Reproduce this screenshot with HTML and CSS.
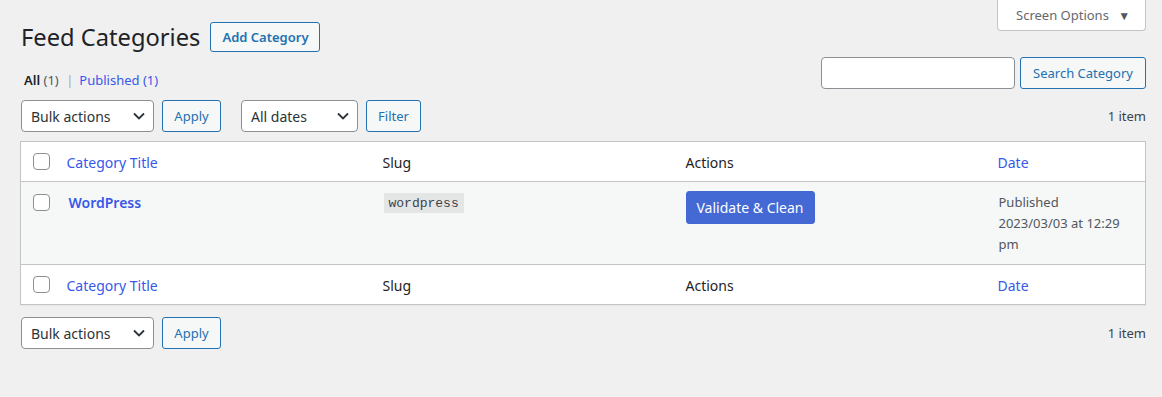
FILE: index.html
```html
<!DOCTYPE html>
<html lang="en">
<head>
    <meta charset="UTF-8">
    <meta name="viewport" content="width=device-width, initial-scale=1.0">
    <title>Feed Categories</title>
    <link rel="stylesheet" href="styles.css">
</head>
<body>
    <div class="screen-meta-links">
        <button class="screen-options">Screen Options <span class="arrow">&#9660;</span></button>
    </div>
    <div class="wrap">
        <div class="page-head">
            <h1>Feed Categories</h1>
            <a href="#" class="page-title-action">Add Category</a>
        </div>

        <div class="list-top">
            <ul class="subsubsub">
                <li><a href="#" class="current">All <span class="count">(1)</span></a> <span class="sep">|</span></li>
                <li><a href="#">Published <span class="count-link">(1)</span></a></li>
            </ul>
            <div class="search-box">
                <input type="search" class="search-input">
                <button class="button">Search Category</button>
            </div>
        </div>

        <div class="tablenav">
            <div class="actions">
                <div class="select select-bulk">
                    <span>Bulk actions</span>
                    <svg width="12" height="8" viewBox="0 0 12 8"><path d="M1 1.5l5 5 5-5" fill="none" stroke="#2c3338" stroke-width="1.8"/></svg>
                </div>
                <button class="button">Apply</button>
            </div>
            <div class="actions">
                <div class="select select-dates">
                    <span>All dates</span>
                    <svg width="12" height="8" viewBox="0 0 12 8"><path d="M1 1.5l5 5 5-5" fill="none" stroke="#2c3338" stroke-width="1.8"/></svg>
                </div>
                <button class="button">Filter</button>
            </div>
            <div class="displaying-num">1 item</div>
        </div>

        <table class="list-table">
            <colgroup>
                <col class="col-cb">
                <col class="col-title">
                <col class="col-slug">
                <col class="col-actions">
                <col>
            </colgroup>
            <thead>
                <tr>
                    <td class="check-column"><input type="checkbox" class="cb"></td>
                    <th><a href="#">Category Title</a></th>
                    <th>Slug</th>
                    <th>Actions</th>
                    <th><a href="#">Date</a></th>
                </tr>
            </thead>
            <tbody>
                <tr>
                    <td class="check-column"><input type="checkbox" class="cb"></td>
                    <td class="title-cell"><a href="#" class="row-title">WordPress</a></td>
                    <td class="slug-cell"><code>wordpress</code></td>
                    <td class="actions-cell"><button class="button-primary">Validate &amp; Clean</button></td>
                    <td class="date-cell">Published<br>2023/03/03 at 12:29 pm</td>
                </tr>
            </tbody>
            <tfoot>
                <tr>
                    <td class="check-column"><input type="checkbox" class="cb"></td>
                    <th><a href="#">Category Title</a></th>
                    <th>Slug</th>
                    <th>Actions</th>
                    <th><a href="#">Date</a></th>
                </tr>
            </tfoot>
        </table>

        <div class="tablenav bottom">
            <div class="actions">
                <div class="select select-bulk">
                    <span>Bulk actions</span>
                    <svg width="12" height="8" viewBox="0 0 12 8"><path d="M1 1.5l5 5 5-5" fill="none" stroke="#2c3338" stroke-width="1.8"/></svg>
                </div>
                <button class="button">Apply</button>
            </div>
            <div class="displaying-num">1 item</div>
        </div>
    </div>
</body>
</html>
```

FILE: styles.css
```css
body {
    font-family: "Noto Sans", "Open Sans", sans-serif;
    font-size: 13px;
    color: #3c434a;
    background-color: #f0f0f1;
    margin: 0;
}
a {
    color: #3858e9;
    text-decoration: none;
}
.screen-meta-links {
    float: right;
    margin-right: 16px;
}
.screen-options {
    font-family: inherit;
    font-size: 13px;
    color: #646970;
    background-color: white;
    border: 1px solid #c3c4c7;
    border-top: none;
    border-radius: 0 0 4px 4px;
    width: 149px;
    height: 31px;
    padding: 0 0 0 18px;
    text-align: left;
    cursor: pointer;
}
.screen-options .arrow {
    font-size: 12px;
    margin-left: 6px;
    color: #50575e;
}
.wrap {
    padding: 22px 16px 0 20px;
}
.page-head {
    display: flex;
    align-items: center;
    height: 30px;
}
.page-head h1 {
    margin: 0 10px 0 1px;
    font-size: 23.7px;
    font-weight: 400;
    color: #1d2327;
    line-height: 30px;
}
.page-title-action {
    display: inline-block;
    height: 30px;
    line-height: 28px;
    box-sizing: border-box;
    padding: 0 10px 0 11px;
    border: 1px solid #2271b1;
    border-radius: 3px;
    background-color: #f6f7f7;
    color: #2271b1;
    font-size: 13px;
    font-weight: 600;
}
.list-top {
    display: flex;
    justify-content: space-between;
    align-items: flex-start;
    margin-top: 5px;
}
.subsubsub {
    list-style: none;
    margin: 10px 0 0 4px;
    padding: 0;
    display: flex;
    line-height: 26px;
}
.subsubsub li {
    margin-right: 4px;
}
.subsubsub .current {
    color: #1d2327;
    font-weight: 600;
}
.subsubsub .count {
    color: #50575e;
    font-weight: 400;
}
.subsubsub .sep {
    color: #a7aaad;
    margin: 0 2px 0 4px;
}
.search-box {
    display: flex;
    gap: 5px;
}
.search-input {
    width: 194px;
    height: 32px;
    box-sizing: border-box;
    border: 1px solid #8c8f94;
    border-radius: 4px;
    background-color: white;
    margin: 0;
}
.button {
    height: 32px;
    box-sizing: border-box;
    padding: 0 10px;
    border: 1px solid #2271b1;
    border-radius: 3px;
    background-color: #f6f7f7;
    color: #2271b1;
    font-family: inherit;
    font-size: 13px;
    cursor: pointer;
}
.search-box .button {
    width: 126px;
    padding: 0;
}
.tablenav {
    display: flex;
    align-items: center;
    height: 32px;
    margin-top: 7px;
    padding-left: 1px;
}
.tablenav .actions {
    display: flex;
    gap: 8px;
    margin-right: 20px;
}
.tablenav .actions .button {
    padding: 0;
    width: 59px;
}
.tablenav .actions .select-dates + .button {
    width: 55px;
}
.select {
    display: flex;
    align-items: center;
    justify-content: space-between;
    height: 32px;
    box-sizing: border-box;
    padding: 0 8px 0 9px;
    border: 1px solid #8c8f94;
    border-radius: 4px;
    background-color: white;
    color: #2c3338;
    font-size: 14px;
}
.select-bulk {
    width: 133px;
}
.select-dates {
    width: 117px;
}
.displaying-num {
    margin-left: auto;
    color: #3c434a;
}
.list-table {
    width: 100%;
    margin-top: 9px;
    border-collapse: collapse;
    table-layout: fixed;
    border: 1px solid #c3c4c7;
    background-color: white;
    box-shadow: 0 1px 1px rgba(0, 0, 0, 0.04);
}
.col-cb {
    width: 36px;
}
.col-title {
    width: 316px;
}
.col-slug {
    width: 303px;
}
.col-actions {
    width: 312px;
}
.list-table th,
.list-table td {
    text-align: left;
    font-weight: 400;
    padding: 10px 10px 8px;
    line-height: 21px;
}
.list-table thead th,
.list-table tfoot th {
    font-size: 14px;
    color: #1d2327;
}
.list-table thead tr {
    border-bottom: 1px solid #c3c4c7;
}
.list-table tfoot tr {
    border-top: 1px solid #c3c4c7;
}
.list-table .check-column {
    padding: 0 0 0 12px;
    vertical-align: middle;
}
.cb {
    appearance: none;
    display: block;
    width: 17px;
    height: 17px;
    margin: 0;
    border: 1px solid #8c8f94;
    border-radius: 4px;
    background-color: white;
}
.list-table tbody tr {
    background-color: #f6f7f7;
}
.list-table tbody td {
    vertical-align: top;
    padding: 10px 10px 9px;
}
.list-table tbody .check-column {
    vertical-align: top;
    padding: 12px 0 0 12px;
}
.list-table tbody .title-cell {
    padding-left: 12px;
}
.row-title {
    font-size: 14px;
    font-weight: 600;
}
.list-table tbody .slug-cell {
    padding-left: 11px;
}
code {
    font-family: "Liberation Mono", monospace;
    font-size: 13px;
    color: #3c434a;
    background-color: rgba(0, 0, 0, 0.07);
    padding: 3px 5px 2px;
}
.list-table tbody .actions-cell {
    padding-top: 9px;
}
.button-primary {
    height: 33px;
    padding: 0 10px;
    border: 1px solid #4468d4;
    border-radius: 3px;
    background-color: #4468d4;
    color: white;
    font-family: inherit;
    font-size: 14px;
    cursor: pointer;
}
.date-cell {
    color: #50575e;
}
.list-table tbody .date-cell {
    padding-left: 11px;
}
.tablenav.bottom {
    margin-top: 12px;
}
```
